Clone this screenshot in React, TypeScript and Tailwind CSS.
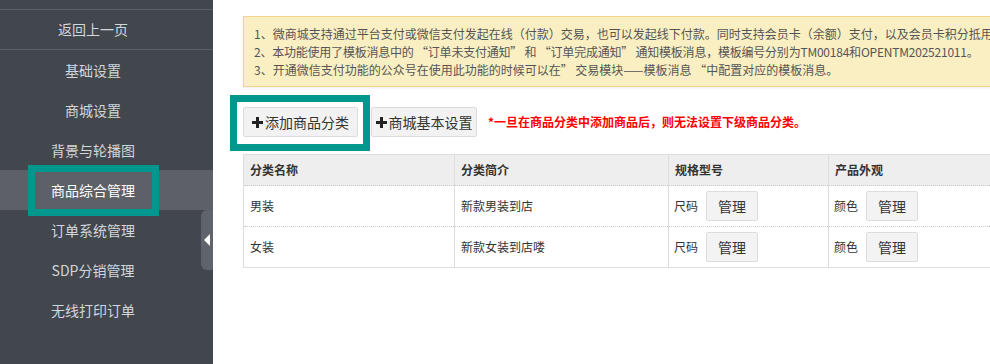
import React from 'react';

const FONT = { fontFamily: '"Noto Sans CJK SC", "Noto Sans", sans-serif' };

const menu = ['基础设置', '商城设置', '背景与轮播图', '商品综合管理', '订单系统管理', 'SDP分销管理', '无线打印订单'];

const notices = [
  '1、微商城支持通过平台支付或微信支付发起在线（付款）交易，也可以发起线下付款。同时支持会员卡（余额）支付，以及会员卡积分抵用',
  '2、本功能使用了模板消息中的 “订单未支付通知” 和 “订单完成通知” 通知模板消息，模板编号分别为TM00184和OPENTM202521011。',
  '3、开通微信支付功能的公众号在使用此功能的时候可以在” 交易模块——模板消息 “中配置对应的模板消息。',
];

const rows = [
  { name: '男装', intro: '新款男装到店' },
  { name: '女装', intro: '新款女装到店喽' },
];

function Plus() {
  return (
    <svg width="11" height="11" viewBox="0 0 11 11" className="mr-[1px]">
      <path d="M4 0h3v4h4v3H7v4H4V7H0V4h4z" fill="#222" />
    </svg>
  );
}

function Sidebar() {
  return (
    <div className="relative w-[213px] h-[364px] shrink-0 bg-[#42464d] text-[14px] text-[#d3d6db]">
      <div className="mt-[9px] h-[41px] border-y border-[#5b5f66] flex items-center">
        <span className="w-[186px] text-center">返回上一页</span>
      </div>
      {menu.map((m) => (
        <div
          key={m}
          className={`h-[40px] flex items-center ${m === '商品综合管理' ? 'bg-[#5e6068] text-white' : ''}`}
        >
          <span className="w-[186px] text-center">{m}</span>
        </div>
      ))}
      <div className="absolute left-[28px] top-[165px] w-[131px] h-[51px] border-[7px] border-[#00978f]" />
      <div className="absolute right-0 top-[210px] w-[12px] h-[60px] rounded-l-[6px] bg-[#5f636b] flex items-center pl-[3px]">
        <svg width="6" height="12" viewBox="0 0 6 12">
          <path d="M6 0L0 6l6 6z" fill="#fff" />
        </svg>
      </div>
    </div>
  );
}

function Main() {
  return (
    <div className="relative flex-1 min-w-0 h-[364px] bg-white overflow-hidden pl-[30px] text-[#333]">
      <div className="mt-[16px] w-[800px] border border-[#f2d58c] bg-[#faefc2] pt-[8px] pb-[7px] pl-[10px] text-[12px] leading-[18px] text-[#555] whitespace-nowrap shadow-[0_1px_2px_rgba(0,0,0,0.08)]">
        <div>{notices[0]}</div>
        <div className="tracking-[-0.22px]">{notices[1]}</div>
        <div>{notices[2]}</div>
      </div>

      <div className="mt-[20px] flex items-center">
        <button className="w-[115px] h-[30px] flex items-center justify-center gap-[1px] bg-[#f2f2f2] border border-[#dcdcdc] rounded-[2px] text-[14px] text-[#333]">
          <Plus />添加商品分类
        </button>
        <button className="ml-[13px] w-[106px] h-[30px] flex items-center justify-center gap-[1px] bg-[#f2f2f2] border border-[#dcdcdc] rounded-[2px] text-[14px] text-[#333]">
          <Plus />商城基本设置
        </button>
        <span className="ml-[11px] text-[12px] font-bold text-[#ff0000]">*一旦在商品分类中添加商品后，则无法设置下级商品分类。</span>
      </div>

      <table className="mt-[17px] w-[747px] border-collapse border border-[#dddddd] text-[12px] table-fixed">
        <colgroup>
          <col className="w-[211px]" />
          <col className="w-[214px]" />
          <col className="w-[160px]" />
          <col className="w-[162px]" />
        </colgroup>
        <thead>
          <tr className="h-[31px] bg-[#eeeeee] border-b border-dotted border-[#c8c8c8]">
            {['分类名称', '分类简介', '规格型号', '产品外观'].map((h) => (
              <th key={h} className="text-left font-bold pl-[6px] border-x border-[#dddddd]">{h}</th>
            ))}
          </tr>
        </thead>
        <tbody>
          {rows.map((r, i) => (
            <tr key={r.name} className={`h-[41px] ${i === 0 ? 'border-b border-dotted border-[#c8c8c8]' : ''}`}>
              <td className="pl-[6px] border-x border-[#dddddd]">{r.name}</td>
              <td className="pl-[6px] border-x border-[#dddddd]">{r.intro}</td>
              <td className="pl-[5px] border-x border-[#dddddd]">
                <div className="flex items-center">
                  <span>尺码</span>
                  <button className="ml-[8px] w-[52px] h-[30px] bg-[#f3f3f3] border border-[#dcdcdc] rounded-[2px] text-[14px] text-[#333]">管理</button>
                </div>
              </td>
              <td className="pl-[5px] border-x border-[#dddddd]">
                <div className="flex items-center">
                  <span>颜色</span>
                  <button className="ml-[8px] w-[52px] h-[30px] bg-[#f3f3f3] border border-[#dcdcdc] rounded-[2px] text-[14px] text-[#333]">管理</button>
                </div>
              </td>
            </tr>
          ))}
        </tbody>
      </table>

      <div className="absolute left-[17px] top-[95px] w-[140px] h-[56px] border-[7px] border-[#00978f]" />
    </div>
  );
}

export default function App() {
  return (
    <div className="flex w-[990px] h-[364px] overflow-hidden" style={FONT}>
      <Sidebar />
      <Main />
    </div>
  );
}
